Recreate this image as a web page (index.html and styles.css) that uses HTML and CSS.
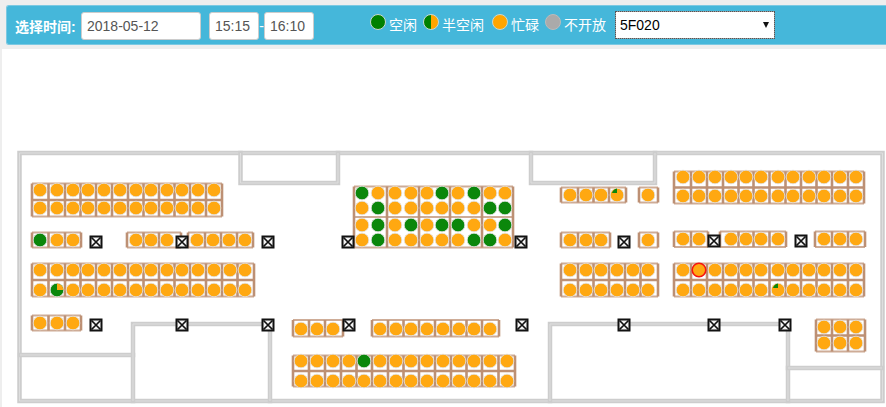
FILE: index.html
```html
<!DOCTYPE html>
<html lang="zh">
<head>
<meta charset="utf-8">
<title>选择时间</title>
<link rel="stylesheet" href="styles.css">
</head>
<body>
<form class="bar">
  <label class="bar-label">选择时间:</label>
  <input class="field field-date" value="2018-05-12">
  <div class="times">
    <input class="field field-time" value="15:15">
    <span class="dash">-</span>
    <input class="field field-time" value="16:10">
  </div>
  <ul class="legend">
    <li class="legend-item"><i class="dot dot-free"></i><span>空闲</span></li>
    <li class="legend-item"><i class="dot dot-half"></i><span>半空闲</span></li>
    <li class="legend-item legend-item-busy"><i class="dot dot-busy"></i><span>忙碌</span></li>
    <li class="legend-item"><i class="dot dot-closed"></i><span>不开放</span></li>
  </ul>
  <div class="select-wrap">
    <select class="room"><option>5F020</option></select>
  </div>
</form>
<main class="panel">
  <svg id="floor" class="floor" viewBox="2 49 884 358" xmlns="http://www.w3.org/2000/svg"></svg>
</main>
<script src="map.js"></script>
</body>
</html>
```
FILE: styles.css
```css
* { box-sizing: border-box; }
html, body { height: 100%; }
body {
  margin: 0;
  background: #eeeeee;
  font-family: "Liberation Sans", "Noto Sans CJK SC", sans-serif;
  font-size: 14px;
  overflow: hidden;
}
.bar {
  height: 40px;
  margin: 5px 0 4px 6px;
  padding: 2px 0 0 8px;
  display: flex;
  align-items: center;
  background: #45b7da;
  border: 1px solid #7cc9e2;
  border-right: 0;
  border-radius: 3px 0 0 3px;
  color: #fff;
}
.bar-label { font-weight: bold; width: 66px; white-space: nowrap; }
.field {
  height: 28px;
  border: 1px solid #cccccc;
  border-radius: 3px;
  background: #fff;
  color: #555;
  font: 14px "Liberation Sans", sans-serif;
  padding: 0 5px;
}
.field-date { width: 120px; margin-right: 8px; }
.times { display: flex; align-items: center; width: 105px; }
.field-time { width: 50px; }
.dash { width: 5px; text-align: center; line-height: 1; overflow: hidden; }
.legend {
  list-style: none;
  margin: 0 0 0 56px;
  padding: 0;
  display: flex;
  gap: 6px;
}
.legend-item { display: flex; align-items: flex-start; gap: 3px; height: 28px; line-height: 28px; white-space: nowrap; }
.legend-item-busy { margin-left: 2px; }
.legend-item span { margin-top: -1px; }
.dot { display: block; width: 16px; height: 16px; margin-top: 2px; border-radius: 50%; border: 1px solid #c9d8cf; }
.dot-free { background: #008000; }
.dot-half { background: linear-gradient(90deg, #008000 50%, #ffa500 50%); }
.dot-busy { background: #ffa500; }
.dot-closed { background: #aaaaaa; border-color: #bbb; }
.select-wrap { position: relative; width: 160px; height: 28px; margin: -2px 0 0 9px; }
.select-wrap::after {
  content: "";
  position: absolute;
  right: 6px;
  top: 11px;
  border: 3.5px solid transparent;
  border-top: 6px solid #111;
  border-bottom: 0;
}
.room {
  appearance: none;
  width: 100%;
  height: 100%;
  border: 1px solid #9a9a9a;
  outline: 1px dotted #555;
  outline-offset: -1px;
  border-radius: 0;
  background: #fff;
  color: #000;
  font: 14px "Liberation Sans", sans-serif;
  padding: 0 4px;
}
.panel { margin-left: 2px; height: 358px; background: #fff; }
.floor { display: block; width: 884px; height: 358px; }
.wall { fill: none; stroke: #cdcdcd; stroke-width: 4.5; stroke-linecap: square; }
.wall-core { fill: none; stroke: #dedede; stroke-width: 1; }
.desk { stroke: #bd9074; stroke-width: 2.6; fill: none; }
.desk-edge { stroke: #bd9074; stroke-width: 2; fill: none; opacity: .75; }
.seat { stroke: #e2e2e2; stroke-width: .8; }
.seat-busy { fill: #ffa811; }
.seat-free { fill: #0b870b; }
.seat-mark { fill: #0b870b; }
.seat-wedge { fill: #ffa811; }
.seat-picked { stroke: #f5150f; stroke-width: 1.6; }
.door-box { fill: #111; }
.door-in { fill: #f4f4f4; }
.door-x { stroke: #111; stroke-width: 1.7; }
```
FILE: map.js
```js
// Floor plan data: walls, desk groups, doors.
const WALLS = [
  "M19.5 153H882.5V401H19.5Z",
  "M240.5 153V183H338V153",
  "M531 153V183H655V153",
  "M20 355H133",
  "M133 401V324H270V401",
  "M550 401V324H788V401",
  "M788 368H882"
];
const ROW = [40,57,73,88,104,120,136,151,167,182,198,214,230,245];
const MID = [301,317,333,349,364,380,396,411,427,443,459,474,490,507];
const EAST = [570,586,601,617,633,648];
const FAR = [683,699,715,731,746,761,778,793,809,824,840,856];

// box: [x0, x1, y0, y1]; ys: seat centre rows; free/half/picked: "col,row" keys.
const GROUPS = [
  { xs: ROW.slice(0,12), ys: [190,208], box: [32,222,183.5,216.5] },
  { xs: ROW.slice(0,3), ys: [240], box: [32,81,232.5,247.5], free: ["0,0"] },
  { xs: [136,151,167], ys: [240], box: [127,181,232.5,247.5] },
  { xs: [197,213,229,245], ys: [240], box: [188,253,232.5,247.5] },
  { xs: ROW, ys: [270,290], box: [32,254,263.5,296.5], half: { "1,1": "big" } },
  { xs: ROW.slice(0,3), ys: [323], box: [32,81,315.5,330.5] },
  { xs: MID.slice(0,3), ys: [329], box: [293,343,320,336.5] },
  { xs: MID.slice(5,13), ys: [329], box: [372,499,320,336.5] },
  { xs: MID, ys: [361,381], box: [293,515,355.5,386.5], free: ["4,0"] },
  { xs: EAST.slice(0,4), ys: [195], box: [561,626,187.5,202.5], half: { "3,0": "small" } },
  { xs: [648], ys: [195], box: [639,658,187.5,202.5] },
  { xs: EAST.slice(0,3), ys: [240], box: [561,610,232.5,247.5] },
  { xs: [648], ys: [240], box: [639,658,232.5,247.5] },
  { xs: EAST, ys: [270,290], box: [561,658,263.5,296.5] },
  { xs: FAR, ys: [177,196], box: [674,864,171.5,203.5] },
  { xs: FAR.slice(0,2), ys: [239], box: [674,708,231.5,247] },
  { xs: [731,746,761,778], ys: [239], box: [720,786,231.5,247] },
  { xs: [824,840,856], ys: [239], box: [815,865,231.5,247] },
  { xs: FAR, ys: [270,290], box: [674,864,263.5,296.5], half: { "6,1": "small" }, picked: ["1,0"] },
  { xs: [824,840,856], ys: [327,343], box: [816,865,319.5,351.5] }
];
// Centre block of ten two-by-two tables.
const CENTRE = {
  xs: [362,378,395,411,427,442,458,474,490,505],
  ys: [193,208,225,240],
  frames: [354,387,419,450,482,513],
  free: [
    "0,0","5,0","7,0",
    "1,1","8,1","9,1",
    "1,2","3,2","5,2","6,2","9,2",
    "1,3","7,3","8,3"
  ]
};
const DOORS = [
  [96,242],[182,242],[268,242],[348,242],[521,242],[624,242],[714,241],[801,241],
  [96,325],[182,325],[268,325],[349,325],[522,325],[624,325],[714,325],[785,325]
];

const line = (x1, y1, x2, y2, cls = "desk") => `<line class="${cls}" x1="${x1}" y1="${y1}" x2="${x2}" y2="${y2}"/>`;

function seat(x, y, state) {
  const cls = state === "free" ? "seat-free" : "seat-busy";
  const extra = state === "picked" ? " seat-picked" : "";
  let out = `<circle class="seat ${cls}${extra}" cx="${x}" cy="${y}" r="6.8"/>`;
  if (state === "big") {
    out = `<circle class="seat seat-free" cx="${x}" cy="${y}" r="6.8"/>` +
      `<path class="seat-wedge" d="M${x} ${y}V${y - 6.4}A6.4 6.4 0 0 1 ${x + 6.4} ${y}Z"/>`;
  }
  if (state === "small") {
    out += `<path class="seat-mark" d="M${x} ${y - 2}V${y - 6.4}A6.4 6.4 0 0 0 ${x - 5} ${y - 2}Z"/>`;
  }
  return out;
}

function group(g) {
  const [x0, x1, y0, y1] = g.box;
  let desks = line(x0, y0, x1, y0, "desk-edge") + line(x0, y1, x1, y1, "desk-edge");
  if (g.ys.length > 1) {
    const my = (y0 + y1) / 2;
    desks += line(x0, my, x1, my);
  }
  const cuts = [x0];
  for (let i = 1; i < g.xs.length; i++) cuts.push((g.xs[i - 1] + g.xs[i]) / 2);
  cuts.push(x1);
  cuts.forEach(x => { desks += line(x, y0, x, y1); });
  let seats = "";
  g.ys.forEach((y, r) => g.xs.forEach((x, c) => {
    const key = `${c},${r}`;
    let state = "busy";
    if ((g.free || []).includes(key)) state = "free";
    if ((g.picked || []).includes(key)) state = "picked";
    if (g.half && g.half[key]) state = g.half[key];
    seats += seat(x, y, state);
  }));
  return { desks, seats };
}

function door([x, y]) {
  return `<rect class="door-box" x="${x - 6.5}" y="${y - 6.5}" width="13" height="13"/>` +
    `<rect class="door-in" x="${x - 4.5}" y="${y - 4.5}" width="9" height="9"/>` +
    `<path class="door-x" d="M${x - 4.5} ${y - 4.5}L${x + 4.5} ${y + 4.5}M${x + 4.5} ${y - 4.5}L${x - 4.5} ${y + 4.5}"/>`;
}

let desks = "", seats = "";
GROUPS.forEach(g => { const r = group(g); desks += r.desks; seats += r.seats; });

const [cy0, cy1, cy2] = [186.5, 217, 247.5];
CENTRE.frames.forEach(x => { desks += line(x, cy0, x, cy2); });
[cy0, cy1, cy2].forEach(y => { desks += line(354, y, 513, y, "desk-edge"); });
CENTRE.ys.forEach((y, r) => CENTRE.xs.forEach((x, c) => {
  seats += seat(x, y, CENTRE.free.includes(`${c},${r}`) ? "free" : "busy");
}));

const walls = WALLS.map(d => `<path class="wall" d="${d}"/><path class="wall-core" d="${d}"/>`).join("");
document.getElementById("floor").innerHTML = walls + desks + seats + DOORS.map(door).join("");
```
